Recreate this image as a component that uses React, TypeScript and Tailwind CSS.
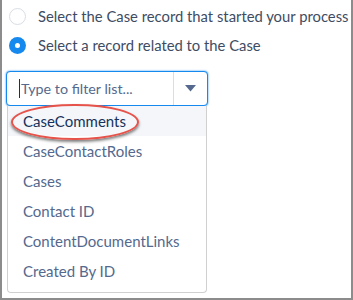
import React from "react";

const items = [
  "CaseComments",
  "CaseContactRoles",
  "Cases",
  "Contact ID",
  "ContentDocumentLinks",
  "Created By ID",
];

export default function App() {
  return (
    <div
      className="w-[353px] h-[300px] bg-white border-x-2 border-b-2 border-[#8c8c8c] overflow-hidden relative"
      style={{ fontFamily: "Lato, 'Liberation Sans', sans-serif" }}
    >
      <div className="flex flex-col gap-[12px] pt-[8px] pl-[7px]">
        <div className="flex items-center gap-[12px] h-[17px]">
          <span className="w-[17px] h-[17px] rounded-full border border-[#d8dde6] bg-white shrink-0" />
          <span className="text-[14.8px] text-[#3e4c63] whitespace-nowrap">
            Select the Case record that started your process
          </span>
        </div>
        <div className="flex items-center gap-[12px] h-[17px]">
          <span className="w-[17px] h-[17px] rounded-full bg-[#1589ee] shrink-0 flex items-center justify-center">
            <span className="w-[5px] h-[5px] rounded-full bg-white" />
          </span>
          <span className="text-[14.8px] text-[#3e4c63] whitespace-nowrap">
            Select a record related to the Case
          </span>
        </div>
      </div>

      <div className="ml-[4px] mt-[17px] w-[202px]">
        <div className="h-[35px] flex border border-[#1589ee] rounded-[4px] shadow-[0_0_2px_#1589ee] bg-white">
          <div className="flex-1 flex items-center pl-[12px] text-[14.3px] text-[#54698d]">
            <span className="w-px h-[19px] bg-[#16325c] mr-[1px]" />
            Type to filter list...
          </div>
          <div className="w-[34px] border-l border-[#d8dde6] flex items-center justify-center">
            <svg width="11" height="7" viewBox="0 0 11 7">
              <path d="M0 0 H11 L5.5 6.5 Z" fill="#54698d" />
            </svg>
          </div>
        </div>
        <div className="mx-[1px] border-x border-b border-[#d0d0d0] rounded-b-[4px] h-[187px]">
          {items.map((it, i) => (
            <div
              key={it}
              className={
                "flex items-center pl-[15px] text-[15px] whitespace-nowrap " +
                (i === 0 ? "bg-[#f4f6f9] text-[#16325c] h-[30px]" : "text-[#54698d] h-[30px]")
              }
            >
              {i === 0 ? (
                <span className="relative">
                  CaseComments
                  <span className="absolute -left-[12px] -right-[13px] -top-[6px] -bottom-[8px] rounded-[50%] border-2 border-[#e5534b] shadow-[0_2px_3px_rgba(0,0,0,0.5)]" />
                </span>
              ) : (
                it
              )}
            </div>
          ))}
        </div>
      </div>
    </div>
  );
}
